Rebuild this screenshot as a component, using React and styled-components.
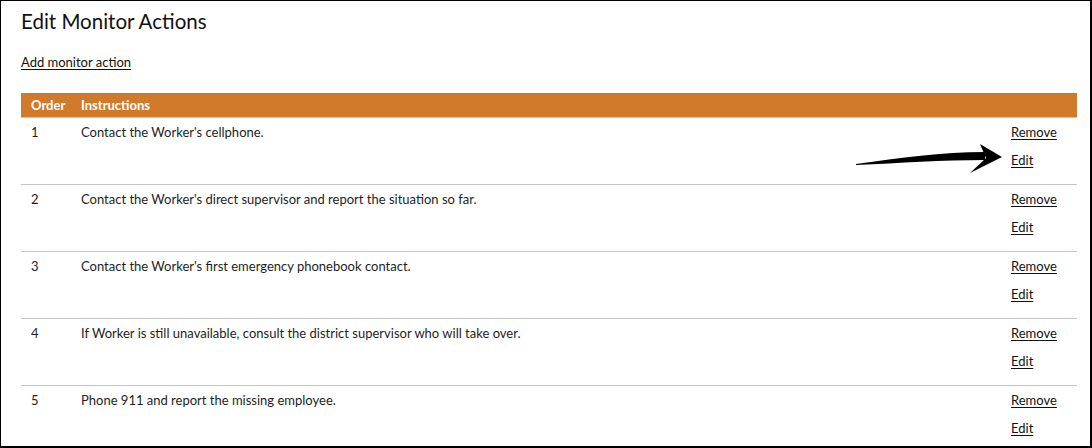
import React from "react";
import styled, { createGlobalStyle } from "styled-components";

const Global = createGlobalStyle`
  html, body { margin: 0; padding: 0; background: #fff; }
  body { font-family: Lato, "Open Sans", sans-serif; color: #1e1e1e; }
`;

const Page = styled.div`
  position: relative;
  box-sizing: border-box;
  width: 1092px;
  height: 448px;
  overflow: hidden;
  border: solid #000;
  border-width: 1px 2px 2px 1px;
  padding: 8px 13px 0 20px;
`;

const Title = styled.h1`
  margin: 0;
  font-size: 20.5px;
  font-weight: 400;
  line-height: 24px;
  color: #111;
`;

const Link = styled.a`
  color: #111;
  text-decoration: underline;
  text-underline-offset: 2px;
  font-size: 13px;
  line-height: 17px;
  cursor: pointer;
`;

const AddRow = styled.div`
  margin-top: 18px;
  height: 17px;
`;

const Table = styled.div`
  margin-top: 25px;
  width: 1056px;
`;

const Row = styled.div`
  display: grid;
  grid-template-columns: 50px 1fr 66px;
  font-size: 13px;
  line-height: 17px;
  & + & {
    border-top: 1px solid #c6c6c6;
  }
`;

const HeadRow = styled(Row)`
  background: #d17a2c;
  color: #fff;
  font-weight: 700;
  font-size: 13px;
  height: 24px;
  align-items: center;
`;

const Cell = styled.div`
  padding-left: 10px;
`;

const BodyRow = styled(Row)`
  height: 60px;
  padding-top: 6px;
`;

const Actions = styled.div`
  display: flex;
  flex-direction: column;
  align-items: flex-start;
  gap: 11px;
`;

const Arrow = styled.svg`
  position: absolute;
  left: 0;
  top: 0;
  pointer-events: none;
`;

const rows = [
  "Contact the Worker's cellphone.",
  "Contact the Worker's direct supervisor and report the situation so far.",
  "Contact the Worker's first emergency phonebook contact.",
  "If Worker is still unavailable, consult the district supervisor who will take over.",
  "Phone 911 and report the missing employee.",
];

export default function App() {
  return (
    <>
      <Global />
      <Page>
        <Title>Edit Monitor Actions</Title>
        <AddRow>
          <Link>Add monitor action</Link>
        </AddRow>
        <Table>
          <HeadRow>
            <Cell>Order</Cell>
            <Cell>Instructions</Cell>
            <div />
          </HeadRow>
          {rows.map((text, i) => (
            <BodyRow key={i}>
              <Cell>{i + 1}</Cell>
              <Cell>{text}</Cell>
              <Actions>
                <Link>Remove</Link>
                <Link>Edit</Link>
              </Actions>
            </BodyRow>
          ))}
        </Table>
        <Arrow width="1092" height="448" viewBox="0 0 1092 448">
          <path
            d="M855 163 C 900 157, 940 151, 984 151 L 984 159 C 940 159, 900 162, 855 164 Z"
            fill="#000"
          />
          <path d="M979 143 L1001 156 L969 172 L985 157 Z" fill="#000" />
        </Arrow>
      </Page>
    </>
  );
}
